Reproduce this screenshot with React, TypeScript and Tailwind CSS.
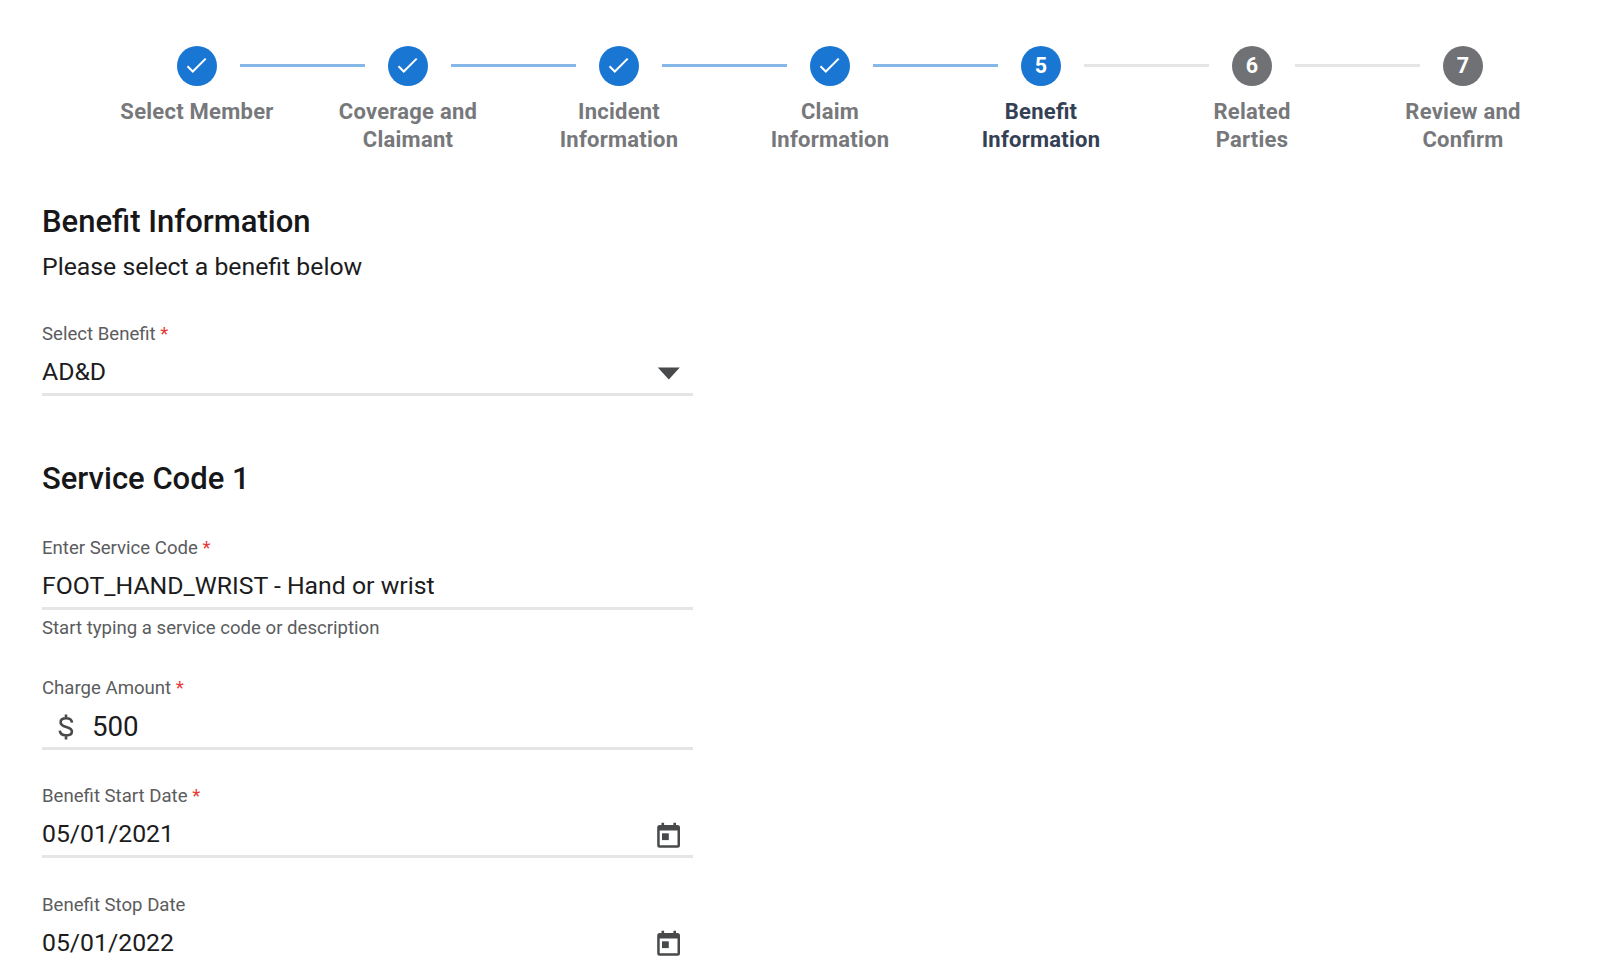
import type { ReactNode } from "react";

const steps = [
  ["Select Member"],
  ["Coverage and", "Claimant"],
  ["Incident", "Information"],
  ["Claim", "Information"],
  ["Benefit", "Information"],
  ["Related", "Parties"],
  ["Review and", "Confirm"],
];
const current = 4;

function CheckIcon() {
  return (
    <svg width="40" height="40" viewBox="0 0 40 40" fill="none" stroke="#fff" strokeWidth="2">
      <path d="M10.5 20.2 L15.800 25.500 L28.700 12.600" />
    </svg>
  );
}

function Connector({ done, hidden }: { done: boolean; hidden: boolean }) {
  const color = hidden ? "bg-transparent" : done ? "bg-[#86b7e9]" : "bg-[#e5e5e5]";
  return <span className={`h-[3px] flex-1 ${color}`} />;
}

function Stepper() {
  return (
    <ol className="ml-[91.5px] flex pt-[45.5px]">
      {steps.map((lines, i) => (
        <li key={i} className="flex w-[211px] shrink-0 flex-col items-center">
          <div className="flex w-full items-center justify-between">
            <Connector done={i <= current} hidden={i === 0} />
            <span
              className={`mx-[23.3px] flex size-10 shrink-0 items-center justify-center rounded-full text-[21.5px] leading-none font-bold text-white ${i <= current ? "bg-[#1976d2]" : "bg-[#6f7175]"}`}
            >
              {i < current ? <CheckIcon /> : i + 1}
            </span>
            <Connector done={i < current} hidden={i === steps.length - 1} />
          </div>
          <div
            className={`mt-[12px] text-center text-[22px] leading-7 font-bold tracking-[0.25px] [font-feature-settings:'liga'] ${i === current ? "text-[#344054]" : "text-[#77787b]"}`}
          >
            {lines.map((l) => (
              <div key={l}>{l}</div>
            ))}
          </div>
        </li>
      ))}
    </ol>
  );
}

function CalendarIcon() {
  return (
    <svg className="mt-px mr-3" width="24" height="26" viewBox="0 0 24 26" fill="#48494b">
      <path
        fillRule="evenodd"
        d="M4.500 .7h2.600v2.300h9.300V.7H19v2.300h1.500a2.500 2.500 0 0 1 2.500 2.500V23.200a2.500 2.500 0 0 1-2.500 2.500H2.700A2.500 2.500 0 0 1 .2 23.200V5.500A2.500 2.500 0 0 1 2.700 3h1.800zM2.700 8.500v14.700h17.800V8.500z"
      />
      <path d="M5 11.300h6.800v6.800H5z" />
    </svg>
  );
}

function Field({ label, required, children, trailing }: { label: string; required?: boolean; children: ReactNode; trailing?: ReactNode }) {
  return (
    <div className="w-[651.4px] border-b-3 border-[#e5e5e5]">
      <div className="text-[18.6px] leading-6 text-[#5b5c5e]">
        {label}
        {required && <span className="text-[#e53935]"> *</span>}
      </div>
      <div className="flex h-[47px] items-center justify-between pt-[10px] pb-[5px] text-[24.8px] leading-8 text-[#1c1c1e]">
        {children}
        {trailing}
      </div>
    </div>
  );
}

export default function App() {
  return (
    <div className="h-[960px] w-[1616px] overflow-hidden bg-white font-['Roboto',sans-serif]">
      <div className="h-[198px]">
        <Stepper />
      </div>
      <main className="pl-[42px]">
        <h1 className="h-[46px] pt-1 text-[31px] leading-10 font-medium text-[#171719]">Benefit Information</h1>
        <p className="h-[78px] pt-[7px] text-[24.8px] leading-8 text-[#1c1c1e]">Please select a benefit below</p>
        <Field
          label="Select Benefit"
          required
          trailing={
            <svg className="mt-px mr-3" width="24" height="14" viewBox="0 0 24 14" fill="#48494b">
              <path d="M.8 1.500h22L11.800 13.500z" />
            </svg>
          }
        >
          <span>AD&amp;D</span>
        </Field>
        <h2 className="h-[140px] pt-[62.500px] text-[31px] leading-10 font-medium text-[#171719]">Service Code 1</h2>
        <Field label="Enter Service Code" required>
          <span>FOOT_HAND_WRIST - Hand or wrist</span>
        </Field>
        <p className="h-[66px] pt-[5.500px] text-[18.6px] leading-6 text-[#5b5c5e]">Start typing a service code or description</p>
        <div className="flex flex-col gap-[34.400px]">
          <Field label="Charge Amount" required>
            <div className="mt-px flex items-center">
              <svg className="mr-[18px] ml-4" width="16" height="26" viewBox="0 0 16 26" fill="none" stroke="#48494b" strokeWidth="2.600">
                <path d="M8 0.500v4M8 21v4.500M14 8.600C13.800 5.700 11.700 4.200 8.200 4.200 4.900 4.200 2.600 5.800 2.600 8.300c0 2.600 2 3.700 5.600 4.600 3.900 1 5.700 2.200 5.700 4.600 0 2.300-2.100 3.900-5.700 3.900-4 0-6.200-1.800-6.400-4.700" />
              </svg>
              <span className="text-[27.700px]">500</span>
            </div>
          </Field>
          <Field label="Benefit Start Date" required trailing={<CalendarIcon />}>
            <span>05/01/2021</span>
          </Field>
          <Field label="Benefit Stop Date" trailing={<CalendarIcon />}>
            <span>05/01/2022</span>
          </Field>
        </div>
      </main>
    </div>
  );
}
